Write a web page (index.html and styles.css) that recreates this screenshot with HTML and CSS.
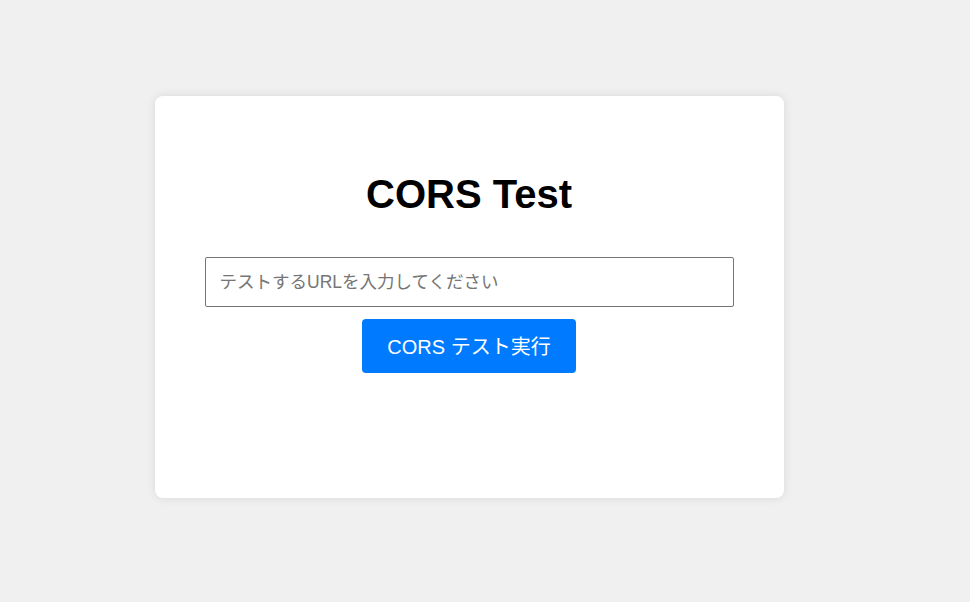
FILE: index.html
```html
<!DOCTYPE html>
<html lang="ja">
<head>
<meta charset="utf-8">
<title>CORS Test</title>
<link rel="stylesheet" href="styles.css">
</head>
<body>
<div class="page">
  <div class="card">
    <h1 class="title">CORS Test</h1>
    <input class="url-input" type="text" placeholder="テストするURLを入力してください">
    <button class="run-btn" type="button">CORS テスト実行</button>
  </div>
</div>
</body>
</html>
```
FILE: styles.css
```css
html, body {
  margin: 0;
  padding: 0;
  background: #f0f0f0;
  font-family: "Liberation Sans", Arial, "Noto Sans CJK JP", sans-serif;
}

.page {
  display: flex;
  justify-content: center;
  align-items: flex-start;
  padding: 96px 32px 0 0;
  min-height: 100vh;
  box-sizing: border-box;
}

.card {
  width: 629px;
  height: 402px;
  box-sizing: border-box;
  padding: 50px;
  background: #ffffff;
  border-radius: 8px;
  box-shadow: 0 0 10px rgba(0, 0, 0, 0.1);
  display: flex;
  flex-direction: column;
  align-items: center;
}

.title {
  font-size: 40px;
  font-weight: bold;
  line-height: 45px;
  margin: 26px 0 40px;
  color: #000;
}

.url-input {
  width: 100%;
  height: 50px;
  box-sizing: border-box;
  border: 1px solid #767676;
  border-radius: 2px;
  padding: 0 14px;
  font-family: "Liberation Sans", Arial, "Noto Sans CJK JP", sans-serif;
  font-size: 17.5px;
  color: #000;
  background: #fff;
  margin: 0;
}

.url-input::placeholder {
  color: #757575;
}

.run-btn {
  margin-top: 12px;
  width: 214px;
  height: 54px;
  box-sizing: border-box;
  padding: 2px 25px 0;
  border: none;
  border-radius: 4px;
  background: #007bff;
  color: #fff;
  font-family: "Liberation Sans", Arial, "Noto Sans CJK JP", sans-serif;
  font-size: 20px;
  line-height: 24px;
  cursor: pointer;
}
```
